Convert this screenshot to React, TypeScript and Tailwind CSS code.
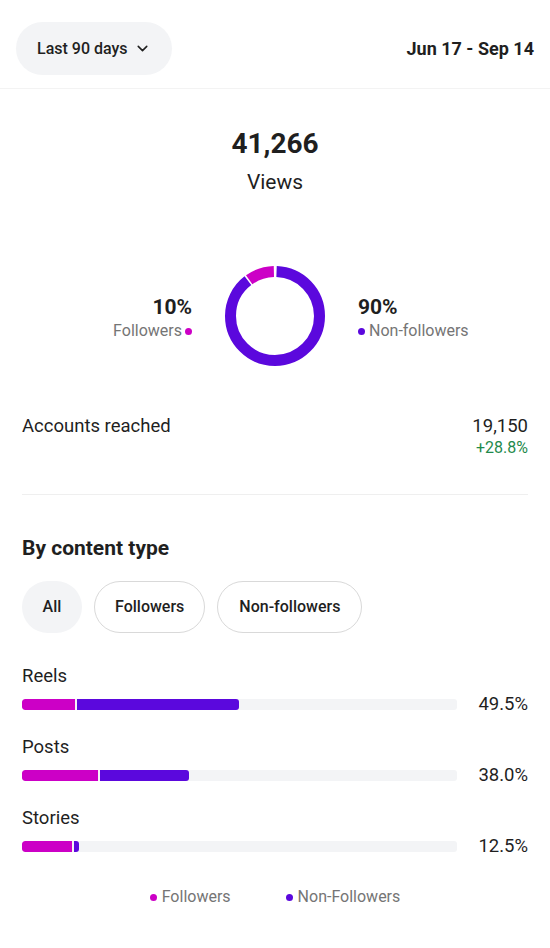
import { ChevronDown } from "lucide-react";

const MAGENTA = "#cc00c6";
const PURPLE = "#5b08dd";

const rows = [
  { label: "Reels", followers: 12.2, non: 37.3, pct: "49.5%" },
  { label: "Posts", followers: 17.5, non: 20.5, pct: "38.0%" },
  { label: "Stories", followers: 11.5, non: 1.2, pct: "12.5%" },
];

const Donut = () => {
  const r = 44.5;
  const c = 2 * Math.PI * r;
  const gap = 1.6;
  const fol = c * 0.1;
  return (
    <svg width="102" height="102" viewBox="0 0 102 102">
      <g transform="rotate(-90 51 51)">
        <circle
          cx="51"
          cy="51"
          r={r}
          fill="none"
          stroke={PURPLE}
          strokeWidth="11"
          strokeDasharray={`${c - fol - gap * 2} ${c}`}
          strokeDashoffset={-gap}
        />
        <circle
          cx="51"
          cy="51"
          r={r}
          fill="none"
          stroke={MAGENTA}
          strokeWidth="11"
          strokeDasharray={`${fol - gap} ${c}`}
          strokeDashoffset={-(c - fol)}
        />
      </g>
    </svg>
  );
};

const Dot = ({ color }: { color: string }) => (
  <span
    className="inline-block w-[7px] h-[7px] rounded-full shrink-0"
    style={{ backgroundColor: color }}
  />
);

export default function App() {
  return (
    <div
      className="w-[550px] h-[948px] bg-white text-[#1f1f1f] overflow-hidden"
      style={{ fontFamily: "Roboto, 'Liberation Sans', sans-serif" }}
    >
      {/* header */}
      <div className="flex items-center justify-between pl-4 pr-4 pt-[22px] pb-[13px] border-b border-[#f3f3f3]">
        <button className="flex items-center gap-[6px] h-[53px] px-[21px] rounded-full bg-[#f3f4f6] text-[16px] font-medium">
          Last 90 days
          <ChevronDown size={17} strokeWidth={2.2} />
        </button>
        <div className="text-[18px] font-bold">Jun 17 - Sep 14</div>
      </div>

      {/* views */}
      <div className="flex flex-col items-center pt-[37px]">
        <div className="text-[28px] font-bold leading-[36px]">41,266</div>
        <div className="text-[21px] leading-[26px] mt-[7px]">Views</div>
      </div>

      {/* donut */}
      <div className="flex items-center justify-center mt-[70px]">
        <div className="flex flex-col items-end w-[150px] pr-[32px] mt-[6px]">
          <div className="text-[21px] font-bold leading-[24px]">10%</div>
          <div className="flex items-center gap-[3px] text-[16px] text-[#757575] leading-[24px]">
            Followers <Dot color={MAGENTA} />
          </div>
        </div>
        <Donut />
        <div className="flex flex-col items-start w-[150px] pl-[32px] mt-[6px]">
          <div className="text-[21px] font-bold leading-[24px]">90%</div>
          <div className="flex items-center gap-[4px] text-[16px] text-[#757575] leading-[24px]">
            <Dot color={PURPLE} /> Non-followers
          </div>
        </div>
      </div>

      {/* accounts reached */}
      <div className="mx-[22px] mt-[47px] pb-[36px] border-b border-[#efefef] flex justify-between">
        <div className="text-[18.5px] leading-[24px]">Accounts reached</div>
        <div className="flex flex-col items-end">
          <div className="text-[18.5px] leading-[24px]">19,150</div>
          <div className="text-[16px] leading-[20px] text-[#1f8a4c]">+28.8%</div>
        </div>
      </div>

      {/* by content type */}
      <div className="px-[22px] pt-[40px]">
        <div className="text-[21px] font-bold leading-[26px]">By content type</div>
        <div className="flex gap-3 mt-[20px]">
          <div className="h-[52px] w-[60px] rounded-full bg-[#f3f4f6] flex items-center justify-center text-[16px] font-medium">
            All
          </div>
          <div className="h-[52px] px-[20px] rounded-full border border-[#d9d9d9] flex items-center text-[16px] font-medium">
            Followers
          </div>
          <div className="h-[52px] px-[21px] rounded-full border border-[#d9d9d9] flex items-center text-[16px] font-medium">
            Non-followers
          </div>
        </div>

        <div className="flex flex-col gap-[19px] mt-[31px]">
          {rows.map((row) => (
            <div key={row.label}>
              <div className="text-[18.5px] leading-[24px]">{row.label}</div>
              <div className="flex items-center mt-[4px] h-[24px]">
                <div className="flex w-[435px] h-[11px] rounded-[3px] bg-[#f3f4f6] overflow-hidden">
                  <div
                    className="h-full rounded-l-[3px]"
                    style={{ width: `${row.followers}%`, backgroundColor: MAGENTA }}
                  />
                  <div
                    className="h-full ml-[2px] rounded-r-[3px]"
                    style={{ width: `${row.non}%`, backgroundColor: PURPLE }}
                  />
                </div>
                <div className="flex-1 text-right text-[18.5px] leading-[24px]">{row.pct}</div>
              </div>
            </div>
          ))}
        </div>

        <div className="flex justify-center gap-[55px] mt-[28px] text-[16px] leading-[22px] text-[#757575]">
          <div className="flex items-center gap-[5px]">
            <Dot color={MAGENTA} /> Followers
          </div>
          <div className="flex items-center gap-[5px]">
            <Dot color={PURPLE} /> Non-Followers
          </div>
        </div>
      </div>
    </div>
  );
}
